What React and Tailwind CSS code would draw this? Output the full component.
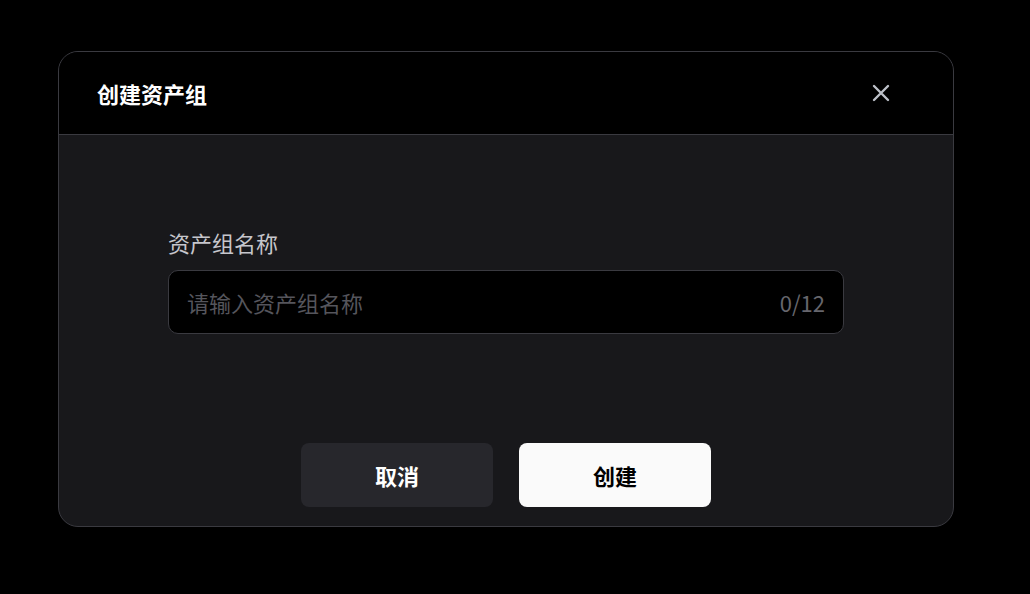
import { useState } from 'react';

const font = { fontFamily: '"Noto Sans CJK SC", "Noto Sans", sans-serif' };

export default function App() {
  const [name, setName] = useState('');

  return (
    <div className="h-[594px] w-full overflow-hidden bg-black" style={font}>
      <div className="ml-[58px] mt-[51px] w-[896px] overflow-hidden rounded-[20px] border border-[#3a3a40] bg-[#18181b]">
        {/* header */}
        <div className="flex h-[83px] items-center justify-between border-b border-[#3a3a40] bg-black pl-[38px] pr-[62px]">
          <h2 className="text-[22px] font-bold leading-none text-white">创建资产组</h2>
          <button className="flex h-[20px] w-[20px] items-center justify-center text-[#bcc0c8]">
            <svg width="18" height="18" viewBox="0 0 18 18" fill="none" stroke="currentColor" strokeWidth="2.4" strokeLinecap="round">
              <path d="M2 2L16 16M16 2L2 16" />
            </svg>
          </button>
        </div>

        {/* body */}
        <div className="flex flex-col px-[109px] pb-[19px] pt-[92px]">
          <label className="text-[22px] leading-[30px] text-[#c6c6cc]">资产组名称</label>
          <div className="mt-[13px] flex h-[64px] items-center rounded-[10px] border border-[#3a3a40] bg-black pl-[18px] pr-[18px]">
            <input
              value={name}
              maxLength={12}
              onChange={(e) => setName(e.target.value)}
              placeholder="请输入资产组名称"
              className="min-w-0 flex-1 bg-transparent text-[22px] text-white outline-none placeholder:text-[#55555c]"
            />
            <span className="text-[22px] text-[#66666d]">{name.length}/12</span>
          </div>

          <div className="mt-[109px] flex justify-center gap-[26px]">
            <button className="h-[64px] w-[192px] rounded-[8px] bg-[#27272c] text-[22px] font-bold text-white">取消</button>
            <button className="h-[64px] w-[192px] rounded-[8px] bg-[#fafafa] text-[22px] font-bold text-black">创建</button>
          </div>
        </div>
      </div>
    </div>
  );
}
